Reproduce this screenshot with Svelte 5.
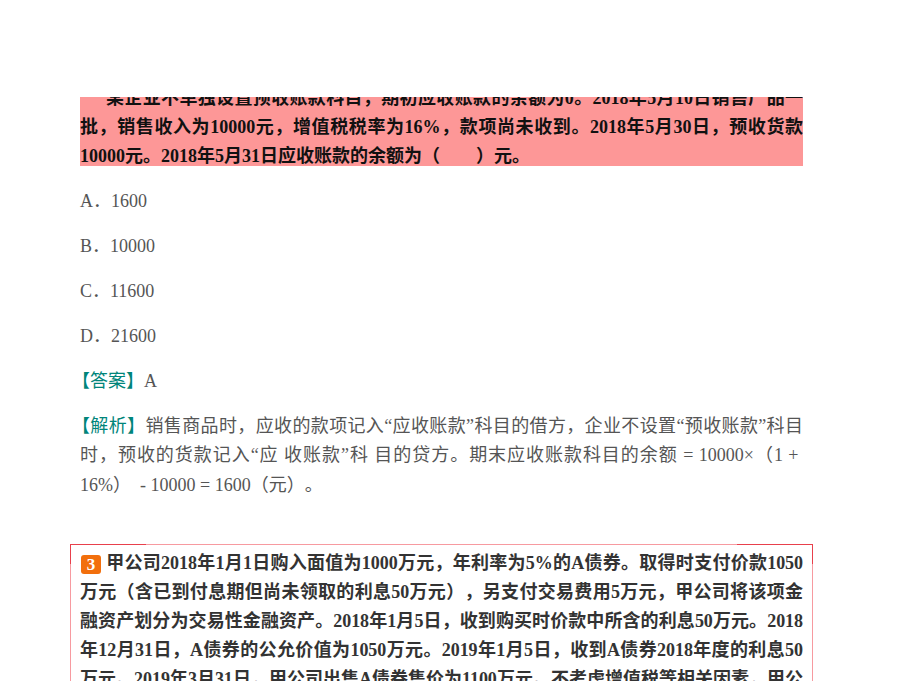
<script>
  const options = ['A．1600', 'B．10000', 'C．11600', 'D．21600'];
</script>

<div class="viewport">
  <div class="page">
    <p class="question">某企业不单独设置预收账款科目，期初应收账款的余额为0。2018年5月10日销售产品一批，销售收入为10000元，增值税税率为16%，款项尚未收到。2018年5月30日，预收货款10000元。2018年5月31日应收账款的余额为（　　）元。</p>
    {#each options as option}
      <p class="line">{option}</p>
    {/each}
    <p class="line"><span class="tag">【答案】</span>A</p>
    <p class="line"><span class="tag">【解析】</span>销售商品时，应收的款项记入“应收账款”科目的借方，企业不设置“预收账款”科目时，预收的货款记入“应 收账款”科 目的贷方。期末应收账款科目的余额 = 10000×（1 +&nbsp; 16%） &nbsp;- 10000 = 1600（元）。</p>
    <section class="card">
      <p class="stem"><span class="badge">3</span>甲公司2018年1月1日购入面值为1000万元，年利率为5%的A债券。取得时支付价款1050万元（含已到付息期但尚未领取的利息50万元），另支付交易费用5万元，甲公司将该项金融资产划分为交易性金融资产。2018年1月5日，收到购买时价款中所含的利息50万元。2018年12月31日，A债券的公允价值为1050万元。2019年1月5日，收到A债券2018年度的利息50万元。2019年3月31日，甲公司出售A债券售价为1100万元。不考虑增值税等相关因素，甲公司出售该债券应确认的投资收益为（　　）万元。</p>
    </section>
  </div>
</div>

<style>
  :global(body) {
    margin: 0;
    background: #fff;
  }
  .viewport {
    height: 584px;
    margin-top: 97px;
    overflow: hidden;
    font-family: "Liberation Serif", "Noto Sans CJK SC", serif;
    font-size: 18px;
    color: #555;
    text-spacing-trim: space-all;
  }
  .page {
    width: 723px;
    margin: -13px 0 0 80px;
  }
  p {
    margin: 0;
    text-align: justify;
  }
  .question {
    height: 82px;
    background: #fd9797;
    color: #111;
    font-weight: 700;
    line-height: 29px;
    text-indent: 26px;
  }
  .line {
    line-height: 29.3px;
    margin-top: 15.7px;
  }
  .question + .line {
    margin-top: 21px;
  }
  .tag {
    color: #00857a;
    margin-left: -8px;
  }
  .card {
    position: relative;
    margin: 44px -10px 0;
    padding: 0 9px 10px;
    border: 1px solid #f79aa0;
  }
  .card::before,
  .card::after {
    content: "";
    position: absolute;
    top: -1px;
    width: 75px;
    height: 19px;
    border-top: 1px solid #e8404c;
  }
  .card::before {
    left: -1px;
    border-left: 1px solid #e8404c;
  }
  .card::after {
    right: -1px;
    border-right: 1px solid #e8404c;
  }
  .stem {
    color: #333;
    font-weight: 700;
    line-height: 29px;
    letter-spacing: -0.05px;
    padding-top: 4px;
  }
  .badge {
    display: inline-block;
    width: 20px;
    height: 19px;
    margin: 0 5px 0 1px;
    border-radius: 3px;
    background: #f26f0c;
    color: #fff;
    font-size: 17px;
    line-height: 19px;
    text-align: center;
    vertical-align: -1px;
  }
</style>
